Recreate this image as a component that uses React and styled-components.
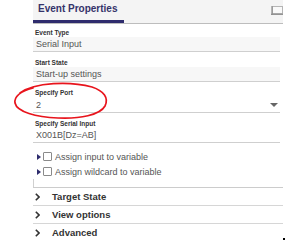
import React from "react";
import styled, { createGlobalStyle } from "styled-components";

const Global = createGlobalStyle`
  html, body { margin: 0; padding: 0; background: #fff; }
  body { font-family: "Liberation Sans", Arial, sans-serif; width: 290px; height: 241px; overflow: hidden; position: relative; }
`;

const Panel = styled.div`
  margin-left: 33px;
  width: 250px;
  position: relative;
`;

const HeaderBar = styled.div`
  display: flex;
  align-items: flex-end;
  justify-content: space-between;
  height: 23px;
  background: #f4f4f4;
  border-bottom: 1px solid #bdbdbd;
`;

const Tab = styled.div`
  height: 20px;
  width: 86px;
  padding-left: 5px;
  border-bottom: 3px solid #2e2c6d;
  font-size: 10px;
  font-weight: bold;
  color: #34336a;
  line-height: 18px;
`;

const WinIcon = styled.svg`
  align-self: flex-start;
  margin-top: 6px;
`;

const Body = styled.div`
  padding-top: 5px;
`;

const Field = styled.div`
  width: 247px;
  margin-bottom: ${(p) => (p.$last ? 0 : 7)}px;
`;

const Label = styled.div`
  font-size: 6.5px;
  font-weight: bold;
  line-height: 8px;
  color: #333;
  padding-left: 2px;
  white-space: nowrap;
`;

const Value = styled.div`
  display: flex;
  align-items: center;
  justify-content: space-between;
  height: ${(p) => (p.$tall ? 15 : 14)}px;
  padding: 0 2px 0 3px;
  background: ${(p) => (p.$readonly ? "#f7f7f7" : "#fff")};
  border-bottom: 1px solid #cfcfcf;
  font-size: 9px;
  color: #555;
  white-space: nowrap;
`;

const Caret = styled.span`
  width: 0;
  height: 0;
  border-left: 4px solid transparent;
  border-right: 4px solid transparent;
  border-top: 4px solid #666;
`;

const CheckGroup = styled.div`
  width: 250px;
  padding-top: 6px;
  border-bottom: 1px solid #cccccc;
`;

const GroupEnd = styled.div`
  height: 8px;
  border-left: 1px solid #d0d0d0;
`;

const CheckRow = styled.div`
  display: flex;
  align-items: center;
  height: 15px;
  padding-left: 4px;
  font-size: 9px;
  color: #555;
  white-space: nowrap;
`;

const Tri = styled.span`
  width: 0;
  height: 0;
  border-top: 3px solid transparent;
  border-bottom: 3px solid transparent;
  border-left: 4px solid #2e2c6d;
  margin-right: 2px;
`;

const Box = styled.span`
  width: 7px;
  height: 7px;
  border: 1px solid #8a8a8a;
  border-radius: 1px;
  background: #fff;
  margin-right: 3px;
`;

const AccRow = styled.div`
  display: flex;
  align-items: center;
  height: 17px;
  padding-left: 2px;
  border-bottom: 1px solid ${(p) => (p.$last ? "transparent" : "#d6d6d6")};
  font-size: 9.5px;
  font-weight: bold;
  color: #333;
  white-space: nowrap;
`;

const Chevron = styled.svg`
  margin-right: 12px;
`;

const Annotation = styled.svg`
  position: absolute;
  left: 0;
  top: 0;
  pointer-events: none;
`;

const Dot = styled.div`
  position: absolute;
  left: 283px;
  top: 238px;
  width: 2px;
  height: 2px;
  background: #000;
`;

const ChevronIcon = () => (
  <Chevron width="5" height="8" viewBox="0 0 5 8">
    <polyline points="0.8,0.8 4,4 0.8,7.2" fill="none" stroke="#333" strokeWidth="1.6" />
  </Chevron>
);

export default function App() {
  return (
    <>
      <Global />
      <Panel>
        <HeaderBar>
          <Tab>Event Properties</Tab>
          <WinIcon width="12" height="9" viewBox="0 0 12 9">
            <rect x="1.5" y="0.5" width="10" height="7" fill="#f9f9f9" stroke="#b5b5b5" />
            <line x1="1" y1="0" x2="1" y2="9" stroke="#8a8a8a" strokeWidth="1.2" />
            <line x1="0" y1="8.3" x2="12" y2="8.3" stroke="#8a8a8a" strokeWidth="1.2" />
          </WinIcon>
        </HeaderBar>
        <Body>
          <Field>
            <Label>Event Type</Label>
            <Value $readonly>Serial Input</Value>
          </Field>
          <Field>
            <Label>Start State</Label>
            <Value $readonly>Start-up settings</Value>
          </Field>
          <Field>
            <Label>Specify Port</Label>
            <Value $tall>
              2<Caret />
            </Value>
          </Field>
          <Field $last>
            <Label>Specify Serial Input</Label>
            <Value>X001B[Dz=AB]</Value>
          </Field>
          <CheckGroup>
            <CheckRow>
              <Tri />
              <Box />
              Assign input to variable
            </CheckRow>
            <CheckRow>
              <Tri />
              <Box />
              Assign wildcard to variable
            </CheckRow>
            <GroupEnd />
          </CheckGroup>
          <AccRow>
            <ChevronIcon />
            Target State
          </AccRow>
          <AccRow>
            <ChevronIcon />
            View options
          </AccRow>
          <AccRow $last>
            <ChevronIcon />
            Advanced
          </AccRow>
        </Body>
      </Panel>
      <Annotation width="290" height="241" viewBox="0 0 290 241">
        <path
          d="M20 93 C 35 82, 70 81, 92 87 C 104 91, 109 98, 105 106 C 100 115, 80 119, 58 118 C 36 117, 17 112, 15 103 C 14 96, 22 91, 33 88"
          fill="none"
          stroke="#e8141c"
          strokeWidth="1.7"
          strokeLinecap="round"
        />
      </Annotation>
      <Dot />
    </>
  );
}
